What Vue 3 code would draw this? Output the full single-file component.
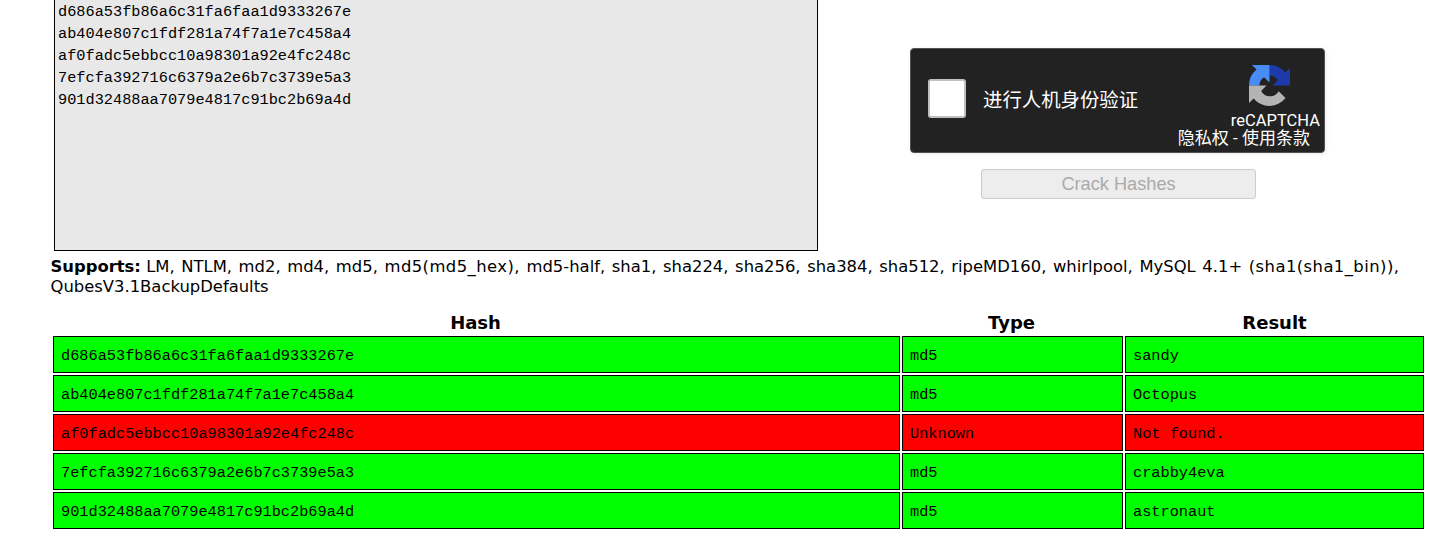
<script setup>
const rows = [
  { hash: 'd686a53fb86a6c31fa6faa1d9333267e', type: 'md5', result: 'sandy', found: true },
  { hash: 'ab404e807c1fdf281a74f7a1e7c458a4', type: 'md5', result: 'Octopus', found: true },
  { hash: 'af0fadc5ebbcc10a98301a92e4fc248c', type: 'Unknown', result: 'Not found.', found: false },
  { hash: '7efcfa392716c6379a2e6b7c3739e5a3', type: 'md5', result: 'crabby4eva', found: true },
  { hash: '901d32488aa7079e4817c91bc2b69a4d', type: 'md5', result: 'astronaut', found: true }
]
</script>

<template>
  <main class="page">
    <section class="top">
      <div class="hashes">
        <div v-for="row in rows" :key="row.hash">{{ row.hash }}</div>
      </div>
      <div class="side">
        <div class="captcha">
          <span class="check"></span>
          <span class="prompt">进行人机身份验证</span>
          <div class="brand">
            <svg class="logo" viewBox="0 0 64 64">
              <path fill="#1c3aa9" d="M32 0A32 32 0 0 1 56.800 11.800L64 4.600V32H36.700L45 23.500A15.600 15.600 0 0 0 32 16.300Z" />
              <path fill="#4a8cf5" d="M0 32A32 32 0 0 1 11.800 7.200L4.600 0H32V27.300L23.500 19A15.600 15.600 0 0 0 16.300 32Z" />
              <path fill="#b4b4b4" d="M57 51.700A32 32 0 0 1 7.200 52.200L0 59.400V32H27.300L19 40.500A15.600 15.600 0 0 0 46.400 41Z" />
            </svg>
            <span class="name">reCAPTCHA</span>
            <span class="terms">隐私权 - 使用条款</span>
          </div>
        </div>
        <button class="crack" disabled>Crack Hashes</button>
      </div>
    </section>
    <p class="supports"><b>Supports:</b> <span class="list">LM, NTLM, md2, md4, md5, <span class="nested">md5(md5_hex),</span> md5-half, sha1, sha224, sha256, sha384, sha512, ripeMD160, whirlpool, MySQL 4.1+ <span class="nested">(sha1(sha1_bin)),</span></span><br>QubesV3.1BackupDefaults</p>
    <div class="results">
      <div class="head">Hash</div>
      <div class="head">Type</div>
      <div class="head">Result</div>
      <template v-for="row in rows" :key="row.hash">
        <div class="cell" :class="{ missing: !row.found }">{{ row.hash }}</div>
        <div class="cell" :class="{ missing: !row.found }">{{ row.type }}</div>
        <div class="cell" :class="{ missing: !row.found }">{{ row.result }}</div>
      </template>
    </div>
  </main>
</template>

<style>
body { margin: 0; background: #fff; overflow: hidden; }
</style>

<style scoped>
.page {
  box-sizing: border-box;
  width: 1444px;
  height: 535px;
  padding-left: 51px;
  overflow: hidden;
  color: #000;
  font-family: "DejaVu Sans", sans-serif;
}
.top { display: flex; height: 257px; }
.hashes {
  box-sizing: border-box;
  width: 764px;
  height: 251px;
  margin-left: 3px;
  padding: 1px 3px;
  border: 1px solid #000;
  border-top: 0;
  background: #e8e8e8;
  font: 15.27px/22px "Liberation Mono", monospace;
}
.side {
  display: flex;
  flex-direction: column;
  width: 415px;
  margin-left: 92px;
  padding-top: 48px;
}
.captcha {
  box-sizing: border-box;
  display: flex;
  width: 415px;
  height: 105px;
  padding-left: 17px;
  border: 1px solid #525252;
  border-radius: 4px;
  background: #222;
  box-shadow: 1px 1px 4px rgba(0, 0, 0, 0.08);
  color: #fff;
  font-family: Roboto, "Noto Sans CJK SC", sans-serif;
}
.check {
  box-sizing: border-box;
  width: 38px;
  height: 39px;
  margin-top: 30px;
  border: 2px solid #c1c1c1;
  border-radius: 3px;
  background: #fff;
}
.prompt {
  width: 180px;
  margin: 38px 0 0 17px;
  font-size: 19.4px;
  line-height: 28px;
  white-space: nowrap;
}
.brand {
  display: flex;
  flex-direction: column;
  flex: 1;
  align-items: flex-end;
  padding: 16px 4px 0 0;
}
.logo { width: 41px; height: 41px; margin-right: 30px; }
.name { margin-top: 5px; font-size: 16.5px; line-height: 20px; white-space: nowrap; }
.terms { margin: -3px 10px 0 0; font-size: 17px; line-height: 20px; white-space: nowrap; }
.crack {
  box-sizing: border-box;
  width: 275px;
  height: 30px;
  margin: 16px 0 0 71px;
  padding: 0;
  border: 1px solid #ccc;
  border-radius: 3px;
  background: #ededed;
  color: #aaa;
  font: 18.2px/28px "Liberation Sans", Arial, sans-serif;
}
.supports {
  margin: 0 0 0 -0.5px;
  font-size: 16.4px;
  line-height: 20px;
  white-space: nowrap;
}
.list { word-spacing: 1.4px; }
.nested { letter-spacing: 0.44px; }
.results {
  display: grid;
  grid-template-columns: 847px 221px 299px;
  grid-template-rows: 23px;
  grid-auto-rows: 37px;
  gap: 2px;
  margin: 14px 0 0 2px;
}
.head {
  font-size: 18px;
  font-weight: bold;
  line-height: 23px;
  text-align: center;
}
.head:nth-child(-n + 2) { margin-left: -2px; }
.cell {
  box-sizing: border-box;
  padding: 1px 0 0 7px;
  border: 1px solid #000;
  background: #0f0;
  font: 15.27px/36px "Liberation Mono", monospace;
}
.missing { background: #f00; }
</style>
